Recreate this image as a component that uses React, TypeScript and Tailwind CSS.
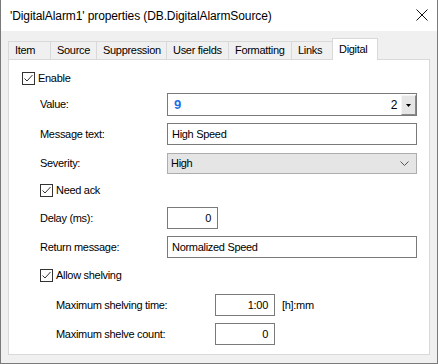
import React from "react";

const FONT = { fontFamily: '"Liberation Sans", Arial, sans-serif' };

const tabs = [
  { label: "Item", width: "w-[42px]" },
  { label: "Source", width: "w-[46px]" },
  { label: "Suppression", width: "w-[70px]" },
  { label: "User fields", width: "w-[62px]" },
  { label: "Formatting", width: "w-[63px]" },
  { label: "Links", width: "w-[41px]" },
];

function CheckBox({ label }: { label: string }) {
  return (
    <div className="flex h-[13px] items-center">
      <span className="flex h-[13px] w-[13px] shrink-0 items-center justify-center border border-[#333333] bg-white">
        <svg width="11" height="11" viewBox="0 0 11 11">
          <polyline
            points="1.5,5.5 4,8 9.5,2"
            fill="none"
            stroke="#333333"
            strokeWidth="1"
          />
        </svg>
      </span>
      <span className="ml-[3px] leading-none">{label}</span>
    </div>
  );
}

function TextBox({
  value,
  width,
  align = "left",
}: {
  value: string;
  width: string;
  align?: "left" | "right";
}) {
  return (
    <div
      className={`flex h-[22px] items-center border border-[#7a7a7a] bg-white ${width} ${
        align === "right" ? "justify-end pr-[6px]" : "pl-[4px]"
      }`}
    >
      {value}
    </div>
  );
}

function FieldRow({
  label,
  labelWidth,
  children,
  className,
}: {
  label: string;
  labelWidth: string;
  children: React.ReactNode;
  className: string;
}) {
  return (
    <div className={`flex items-center ${className}`}>
      <span className={`shrink-0 ${labelWidth}`}>{label}</span>
      {children}
    </div>
  );
}

export default function App() {
  return (
    <div
      className="flex h-[364px] w-[438px] flex-col border-x border-b border-[#7a7a7a] text-[11px] tracking-[-0.3px] text-black"
      style={FONT}
    >
      <header className="flex h-[31px] shrink-0 items-center justify-between bg-white pl-[9px] pr-[9px]">
        <span className="text-[12px] tracking-[-0.1px]">
          'DigitalAlarm1' properties (DB.DigitalAlarmSource)
        </span>
        <svg width="12" height="12" viewBox="0 0 12 12" className="mb-[1px]">
          <line x1="0.5" y1="0.5" x2="11.5" y2="11.5" stroke="#111" strokeWidth="1" />
          <line x1="11.5" y1="0.5" x2="0.5" y2="11.5" stroke="#111" strokeWidth="1" />
        </svg>
      </header>

      <div className="flex flex-1 flex-col bg-[#f0f0f0] pb-[8px] pl-[7px] pr-[7px] pt-[7px]">
        <nav className="relative z-10 flex h-[21px] items-end">
          {tabs.map((tab) => (
            <div
              key={tab.label}
              className={`flex h-[18px] items-center border-l border-t border-[#d9d9d9] pl-[6px] ${tab.width}`}
            >
              {tab.label}
            </div>
          ))}
          <div className="mb-[-1px] flex h-[22px] w-[46px] items-center border-x border-t border-[#d9d9d9] bg-white pb-[1px] pl-[6px]">
            Digital
          </div>
        </nav>

        <section className="flex flex-1 flex-col border border-[#d9d9d9] bg-white">
          <div className="ml-[13px] mt-[12px]">
            <CheckBox label="Enable" />
          </div>

          <FieldRow label="Value:" labelWidth="w-[127px]" className="ml-[31px] mt-[8px]">
            <div className="flex h-[23px] w-[250px] items-center border border-[#7a7a7a] bg-white pl-[6px]">
              <span className="flex-1 text-[13px] font-bold text-[#1f6fe5]">9</span>
              <span className="mr-[4px] text-[12px]">2</span>
              <span className="flex h-[20px] w-[15px] items-center justify-center self-end border-b border-r border-l border-t border-b-[#8a8a8a] border-l-[#f5f5f5] border-r-[#8a8a8a] border-t-[#f5f5f5] bg-[#e6e6e6]">
                <svg width="5" height="3" viewBox="0 0 5 3">
                  <polygon points="0,0 5,0 2.5,3" fill="#000" />
                </svg>
              </span>
            </div>
          </FieldRow>

          <FieldRow label="Message text:" labelWidth="w-[127px]" className="ml-[31px] mt-[7px]">
            <TextBox value="High Speed" width="w-[250px]" />
          </FieldRow>

          <FieldRow label="Severity:" labelWidth="w-[127px]" className="ml-[31px] mt-[8px]">
            <div className="flex h-[21px] w-[250px] items-center justify-between border border-[#adadad] bg-[#e5e5e5] pl-[3px] pr-[7px]">
              <span>High</span>
              <svg width="9" height="5" viewBox="0 0 9 5">
                <polyline points="0.5,0.5 4.5,4.5 8.5,0.5" fill="none" stroke="#555" strokeWidth="1" />
              </svg>
            </div>
          </FieldRow>

          <div className="ml-[31px] mt-[10px]">
            <CheckBox label="Need ack" />
          </div>

          <FieldRow label="Delay (ms):" labelWidth="w-[127px]" className="ml-[31px] mt-[10px]">
            <TextBox value="0" width="w-[51px]" align="right" />
          </FieldRow>

          <FieldRow label="Return message:" labelWidth="w-[127px]" className="ml-[31px] mt-[7px]">
            <TextBox value="Normalized Speed" width="w-[250px]" />
          </FieldRow>

          <div className="ml-[31px] mt-[11px]">
            <CheckBox label="Allow shelving" />
          </div>

          <FieldRow label="Maximum shelving time:" labelWidth="w-[159px]" className="ml-[47px] mt-[12px]">
            <TextBox value="1:00" width="w-[60px]" align="right" />
            <span className="ml-[7px]">[h]:mm</span>
          </FieldRow>

          <FieldRow label="Maximum shelve count:" labelWidth="w-[159px]" className="ml-[47px] mt-[7px]">
            <TextBox value="0" width="w-[60px]" align="right" />
          </FieldRow>
        </section>
      </div>
    </div>
  );
}
